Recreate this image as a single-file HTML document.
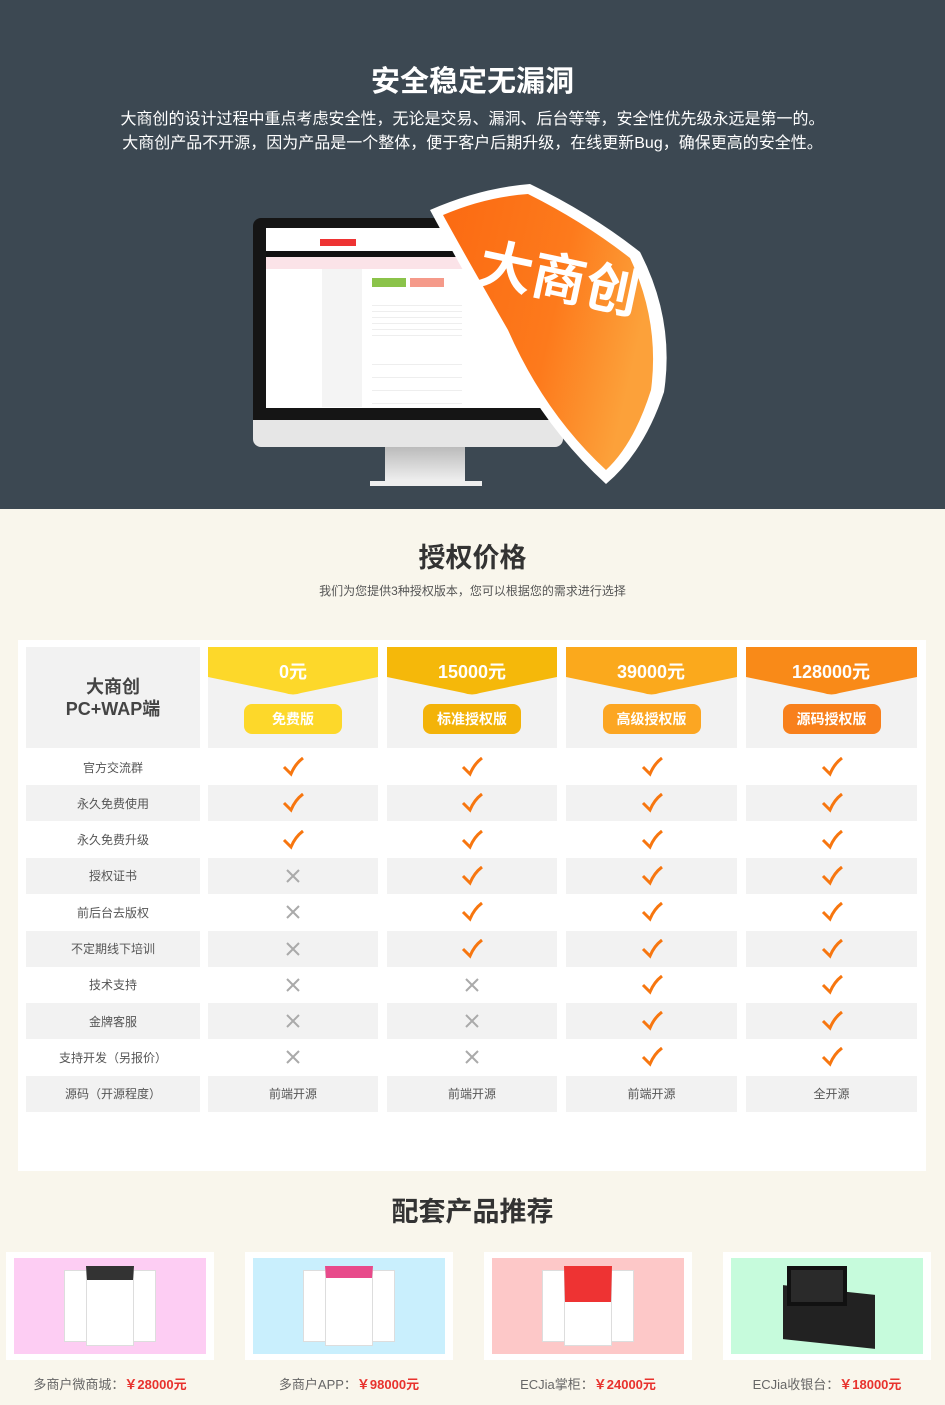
<!DOCTYPE html>
<html><head><meta charset="utf-8"><style>
*{margin:0;padding:0;box-sizing:border-box}
body{width:945px;height:1405px;background:#f9f6ec;font-family:"Liberation Sans","Noto Sans CJK SC",sans-serif;position:relative;overflow:hidden}
.top{position:absolute;left:0;top:0;width:945px;height:509px;background:#3c4852}
.top h1{position:absolute;top:58px;width:100%;text-align:center;color:#fff;font-size:29px;font-weight:bold}
.top p{position:absolute;width:100%;text-align:center;color:#fff;font-size:16px;line-height:24px;top:108px}
.abs{position:absolute}
h2{position:absolute;width:100%;text-align:center;font-size:27px;color:#333;font-weight:bold}
.sub{position:absolute;top:582px;width:100%;text-align:center;font-size:12px;color:#555}
.panel{position:absolute;left:18px;top:640px;width:908px;height:531px;background:#fff}
.cell{position:absolute;text-align:center;font-size:12px;color:#555;display:flex;align-items:center;justify-content:center}
.g{background:#f2f2f2}
.badge{position:absolute;width:98px;height:30px;border-radius:8px;color:#fff;font-weight:bold;font-size:14px;display:flex;align-items:center;justify-content:center}
.price{position:absolute;color:#fff;font-weight:bold;font-size:18px;width:170px;text-align:center}
.card{position:absolute;top:1252px;width:208px;height:108px;background:#fff}
.card>div{position:absolute;left:8px;top:6px;width:192px;height:96px}
.ph{position:absolute;background:#fff;border:1px solid #ddd}
.cap{position:absolute;top:1374px;width:208px;text-align:center;font-size:13px;color:#666}
.cap b{color:#e8322d}
</style></head><body>
<div class="top">
<h1>安全稳定无漏洞</h1>
<p>大商创的设计过程中重点考虑安全性，无论是交易、漏洞、后台等等，安全性优先级永远是第一的。<br>大商创产品不开源，因为产品是一个整体，便于客户后期升级，在线更新Bug，确保更高的安全性。</p>
<div class="abs" style="left:253px;top:218px;width:300px;height:202px;background:#151515;border-radius:8px 8px 0 0"></div>
<div class="abs" style="left:266px;top:228px;width:290px;height:180px;background:#fff"></div>
<div class="abs" style="left:266px;top:251px;width:290px;height:6px;background:#111"></div>
<div class="abs" style="left:266px;top:257px;width:290px;height:12px;background:#fbe3e8"></div>
<div class="abs" style="left:322px;top:269px;width:40px;height:138px;background:#f4f4f4"></div>
<div class="abs" style="left:372px;top:278px;width:34px;height:9px;background:#8bc34a"></div>
<div class="abs" style="left:410px;top:278px;width:34px;height:9px;background:#f59a8a"></div>
<div class="abs" style="left:320px;top:239px;width:36px;height:7px;background:#e33"></div>
<div class="abs" style="left:372px;top:300px;width:90px;height:40px;background:repeating-linear-gradient(#fff 0 5px,#eee 5px 6px)"></div>
<div class="abs" style="left:372px;top:352px;width:90px;height:52px;background:repeating-linear-gradient(#fff 0 12px,#eee 12px 13px)"></div>
<div class="abs" style="left:253px;top:420px;width:310px;height:27px;background:#e6e6e6;border-radius:0 0 8px 8px"></div>
<div class="abs" style="left:385px;top:447px;width:80px;height:36px;background:linear-gradient(#bbb,#f2f2f2)"></div>
<div class="abs" style="left:370px;top:481px;width:112px;height:5px;background:#eee"></div>
<svg class="abs" style="left:0;top:0" width="945" height="509">
<defs><linearGradient id="sg" x1="0" y1="0" x2="1" y2="0.3"><stop offset="0" stop-color="#fb6a12"/><stop offset="0.6" stop-color="#fd7a1c"/><stop offset="1" stop-color="#fca13a"/></linearGradient></defs>
<path d="M430,210 Q480,188 530,184 Q592,214 640,252 Q675,320 664,392 Q644,452 606,484 Q538,422 498,332 Q458,262 430,210Z" fill="#fff"/>
<path d="M443,215 Q485,197 528,194 Q584,222 630,258 Q660,322 651,390 Q634,444 606,470 Q545,414 508,330 Q470,264 443,215Z" fill="url(#sg)"/>
<text x="478" y="298" font-family="Liberation Sans,Noto Sans CJK SC,sans-serif" font-size="54" font-weight="bold" fill="#fff" transform="rotate(12 560 280)">大商创</text>
</svg>
</div>
<h2 style="top:536px">授权价格</h2>
<div class="sub">我们为您提供3种授权版本，您可以根据您的需求进行选择</div>
<div class="panel"></div>
<div class="cell g" style="left:26px;top:647px;width:174px;height:101px;font-size:18px;font-weight:bold;color:#444;line-height:22px">大商创<br>PC+WAP端</div>
<div id="cols"></div>
<h2 style="top:1190px">配套产品推荐</h2>
<div class="card" style="left:6px"><div style="background:#fdcdf3"><span class="ph" style="left:50px;top:12px;width:30px;height:72px"></span><span class="ph" style="left:112px;top:12px;width:30px;height:72px"></span><span class="ph" style="left:72px;top:8px;width:48px;height:80px;border-top:14px solid #333"></span></div></div>
<div class="card" style="left:245px"><div style="background:#c9effd"><span class="ph" style="left:50px;top:12px;width:30px;height:72px"></span><span class="ph" style="left:112px;top:12px;width:30px;height:72px"></span><span class="ph" style="left:72px;top:8px;width:48px;height:80px;border-top:12px solid #e84a8a"></span></div></div>
<div class="card" style="left:484px"><div style="background:#fdc8c8"><span class="ph" style="left:50px;top:12px;width:30px;height:72px"></span><span class="ph" style="left:112px;top:12px;width:30px;height:72px"></span><span class="ph" style="left:72px;top:8px;width:48px;height:80px;border-top:36px solid #e33"></span></div></div>
<div class="card" style="left:723px"><div style="background:#c6fbdc"><span class="abs" style="left:52px;top:32px;width:92px;height:54px;background:#222;transform:skewY(6deg)"></span><span class="abs" style="left:56px;top:8px;width:60px;height:40px;background:#2a2a2a;border:4px solid #111"></span></div></div>
<div class="cap" style="left:6px">多商户微商城：<b>￥28000元</b></div>
<div class="cap" style="left:245px">多商户APP：<b>￥98000元</b></div>
<div class="cap" style="left:484px">ECJia掌柜：<b>￥24000元</b></div>
<div class="cap" style="left:723px">ECJia收银台：<b>￥18000元</b></div>
<script>
var xs=[208,387,566,746],ws=[170,170,171,171];
var cols=["#fdd82a","#f5b80a","#fba91c","#f98a18"],bcol=["#fdd82a","#f3b309","#fca622","#f8801c"];
var prices=["0元","15000元","39000元","128000元"],names=["免费版","标准授权版","高级授权版","源码授权版"];
var rows=["官方交流群","永久免费使用","永久免费升级","授权证书","前后台去版权","不定期线下培训","技术支持","金牌客服","支持开发（另报价）","源码（开源程度）"];
var ok=[[1,1,1,1],[1,1,1,1],[1,1,1,1],[0,1,1,1],[0,1,1,1],[0,1,1,1],[0,0,1,1],[0,0,1,1],[0,0,1,1]];
var last=["前端开源","前端开源","前端开源","全开源"];
var h="";
var chk='<svg width="22" height="20"><path d="M2,10 L9,17 Q13,7 21,1" stroke="#f7760f" stroke-width="3" fill="none"/></svg>';
var xx='<svg width="16" height="16"><path d="M2,2L14,14M14,2L2,14" stroke="#aaa" stroke-width="2"/></svg>';
for(var c=0;c<4;c++){
h+='<div class="cell g" style="left:'+xs[c]+'px;top:647px;width:'+ws[c]+'px;height:101px"></div>';
h+='<svg class="abs" style="left:'+xs[c]+'px;top:647px" width="'+ws[c]+'" height="48"><path d="M0,0H'+ws[c]+'V30L'+(ws[c]/2+8)+',46Q'+ws[c]/2+',49 '+(ws[c]/2-8)+',46L0,30Z" fill="'+cols[c]+'"/></svg>';
h+='<div class="price" style="left:'+xs[c]+'px;top:658px">'+prices[c]+'</div>';
h+='<div class="badge" style="left:'+(xs[c]+ws[c]/2-49)+'px;top:704px;background:'+bcol[c]+'">'+names[c]+'</div>';}
for(var r=0;r<10;r++){
var t=749+r*36.3,g=r%2?' g':'';
h+='<div class="cell'+g+'" style="left:26px;top:'+t+'px;width:174px;height:36px">'+rows[r]+'</div>';
for(var c=0;c<4;c++){
var ct=r<9?(ok[r][c]?chk:xx):last[c];
h+='<div class="cell'+g+'" style="left:'+xs[c]+'px;top:'+t+'px;width:'+ws[c]+'px;height:36px">'+ct+'</div>';}}
document.getElementById("cols").innerHTML=h;
</script>
</body></html>
